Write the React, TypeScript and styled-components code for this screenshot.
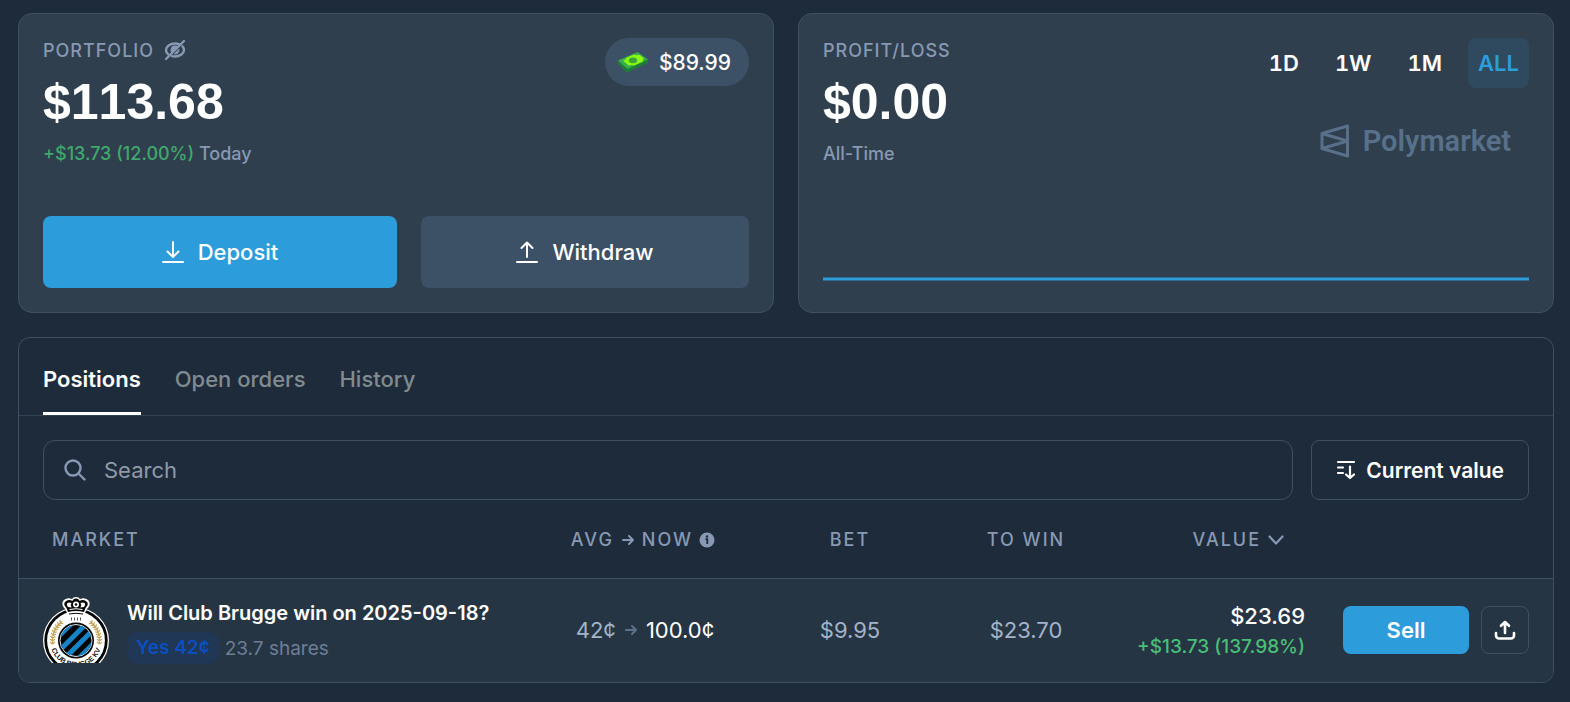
import React, { useState } from 'react';
import styled, { createGlobalStyle, css } from 'styled-components';

const color = {
  page: '#1e2b3a',
  card: '#2f3f4e',
  row: '#263543',
  line: '#3e5062',
  soft: '#3d5166',
  blue: '#2d9cdb',
  label: '#8899b3',
  muted: '#808b90',
  green: '#3fa86b',
  lime: '#48bf75',
};

const GlobalStyle = createGlobalStyle`
  *, *::before, *::after { box-sizing: border-box; }
  body {
    margin: 0;
    background: ${color.page};
    color: #fff;
    font-family: Inter, "Liberation Sans", sans-serif;
    font-size: 22px;
  }
  button, input { font: inherit; color: inherit; }
  button { cursor: pointer; }
`;

const Page = styled.main`
  display: flex;
  flex-direction: column;
  gap: 24px;
  padding: 13px 16px 19px 18px;
`;

const Cards = styled.div`
  display: grid;
  grid-template-columns: 1fr 1fr;
  gap: 24px;
`;

const Card = styled.section`
  display: flex;
  flex-direction: column;
  justify-content: space-between;
  min-height: 300px;
  padding: 24px;
  background: ${color.card};
  border: 1px solid ${color.line};
  border-radius: 14px;
`;

const CardTop = styled.div`
  display: flex;
  justify-content: space-between;
  align-items: flex-start;
`;

const Summary = styled.div`
  display: flex;
  flex-direction: column;
`;

const Label = styled.h2`
  display: flex;
  align-items: center;
  gap: 10px;
  margin: 0;
  height: 24px;
  font-size: 18px;
  font-weight: 500;
  letter-spacing: 1px;
  color: ${color.label};
`;

const PlainButton = styled.button`
  display: flex;
  padding: 0;
  border: 0;
  background: none;
  color: inherit;
`;

const Amount = styled.p`
  margin: 8px 0 0;
  font-family: "Liberation Sans", Arial, sans-serif;
  font-size: 50px;
  line-height: 64px;
  font-weight: 700;
  font-kerning: none;
`;

const Note = styled.p`
  margin: 8px 0 0;
  font-size: 18px;
  line-height: 24px;
  font-weight: 500;
  color: ${color.label};
`;

const Gain = styled.span`
  color: ${color.green};
`;

const Cash = styled.div`
  display: flex;
  align-items: center;
  gap: 10px;
  height: 48px;
  padding: 0 18px 0 12px;
  border-radius: 24px;
  background: ${color.soft};
  font-size: 21px;
  font-weight: 500;
`;

const Actions = styled.div`
  display: grid;
  grid-template-columns: 354fr 328fr;
  gap: 24px;
`;

const ActionButton = styled.button<{ $primary?: boolean }>`
  display: flex;
  align-items: center;
  justify-content: center;
  gap: 14px;
  height: 72px;
  border: 0;
  border-radius: 8px;
  background: ${p => (p.$primary ? color.blue : color.soft)};
  font-weight: 500;
`;

const Side = styled.div`
  display: flex;
  flex-direction: column;
  align-items: flex-end;
  gap: 35px;
`;

const Ranges = styled.div`
  display: flex;
  gap: 16px;
`;

const RangeButton = styled.button<{ $on: boolean }>`
  height: 50px;
  padding: 0 10px;
  border: 0;
  border-radius: 8px;
  background: ${p => (p.$on ? '#2f495e' : 'transparent')};
  color: ${p => (p.$on ? color.blue : '#fff')};
  font-weight: 600;
  font-variant-numeric: tabular-nums;
`;

const Brand = styled.div`
  display: flex;
  align-items: center;
  gap: 13px;
  padding-right: 18px;
  color: #587089;
  font-family: Roboto, sans-serif;
  font-size: 29px;
  line-height: 36px;
  font-weight: 600;
`;

const ChartLine = styled.svg`
  display: block;
  width: 100%;
  height: 4px;
  margin-bottom: 7px;
`;

const Panel = styled.section`
  overflow: hidden;
  border: 1px solid ${color.line};
  border-radius: 12px;
`;

const Tabs = styled.div`
  display: flex;
  gap: 34px;
  height: 78px;
  padding: 0 24px;
  border-bottom: 1px solid #314252;
`;

const Tab = styled.button<{ $on: boolean }>`
  padding: 8px 0 0;
  border: 0;
  background: none;
  border-bottom: 3px solid ${p => (p.$on ? '#fff' : 'transparent')};
  color: ${p => (p.$on ? '#fff' : color.muted)};
  font-weight: ${p => (p.$on ? 600 : 500)};
`;

const Tools = styled.div`
  display: flex;
  gap: 18px;
  padding: 24px 24px 0;
`;

const outlined = css`
  display: flex;
  align-items: center;
  border: 1px solid ${color.line};
  background: none;
`;

const SearchBox = styled.label`
  ${outlined}
  flex: 1;
  gap: 18px;
  height: 60px;
  padding: 0 20px;
  border-radius: 12px;
  color: ${color.label};
`;

const SearchInput = styled.input`
  flex: 1;
  min-width: 0;
  padding: 0;
  border: 0;
  outline: 0;
  background: none;
  color: #fff;
  &::placeholder { color: #8e9aa9; opacity: 1; }
`;

const SortButton = styled.button`
  ${outlined}
  gap: 10px;
  height: 60px;
  padding: 0 24px;
  border-radius: 8px;
  font-size: 21px;
  font-weight: 600;
`;

const Table = styled.table`
  width: 100%;
  table-layout: fixed;
  border-collapse: collapse;
`;

const Head = styled.th<{ $align?: string; $width?: number }>`
  width: ${p => (p.$width ? `${p.$width}px` : 'auto')};
  height: 78px;
  padding: 2px 0 0;
  text-align: ${p => p.$align || 'center'};
  font-size: 18px;
  font-weight: 500;
  letter-spacing: 2px;
  color: ${color.label};
  &:first-child { padding-left: 33px; }
`;

const HeadContent = styled.span`
  display: inline-flex;
  align-items: center;
  gap: 6px;
  padding-right: 4px;
`;

const SortHead = styled(PlainButton)`
  display: inline-flex;
  align-items: center;
  gap: 6px;
  margin-right: 20px;
  letter-spacing: 2px;
`;

const Row = styled.tr`
  background: ${color.row};
  border-top: 1px solid ${color.line};
`;

const Cell = styled.td<{ $align?: string }>`
  height: 104px;
  padding: 0;
  text-align: ${p => p.$align || 'center'};
  color: #a3b3c9;
`;

const Market = styled.div`
  display: flex;
  align-items: center;
  gap: 18px;
  padding-left: 24px;
`;

const MarketText = styled.div`
  display: flex;
  flex-direction: column;
  gap: 4px;
  padding-top: 2px;
`;

const MarketLink = styled.a`
  font-size: 20px;
  line-height: 30px;
  font-weight: 600;
  color: #fff;
  text-decoration: none;
`;

const Holding = styled.div`
  display: flex;
  align-items: center;
  gap: 6px;
  font-size: 19px;
  color: #6c7f97;
`;

const Outcome = styled.span`
  padding: 0 9px;
  line-height: 32px;
  border-radius: 10px;
  background: #203755;
  color: #0a4fc0;
  font-weight: 600;
`;

const Price = styled.div`
  display: inline-flex;
  align-items: center;
  gap: 7px;
`;

const Strong = styled.span`
  color: #fff;
`;

const Value = styled.div`
  padding-top: 3px;
  font-size: 22px;
  line-height: 30px;
  font-weight: 500;
  color: #fff;
`;

const ValueGain = styled.div`
  font-size: 19px;
  line-height: 32px;
  font-weight: 500;
  color: ${color.lime};
`;

const RowActions = styled.div`
  display: flex;
  justify-content: flex-end;
  gap: 12px;
  padding-right: 24px;
  color: #fff;
`;

const SellButton = styled.button`
  width: 126px;
  height: 48px;
  border: 0;
  border-radius: 8px;
  background: ${color.blue};
  font-weight: 600;
`;

const ShareButton = styled.button`
  ${outlined}
  justify-content: center;
  width: 48px;
  height: 48px;
  padding: 0;
  border-radius: 8px;
`;

const Line = styled.svg<{ $weight?: number }>`
  display: block;
  flex: none;
  fill: none;
  stroke: currentColor;
  stroke-width: ${p => p.$weight || 2};
  stroke-linecap: round;
  stroke-linejoin: round;
`;

const HideIcon = () => (
  <Line width="22" height="22" viewBox="0 0 22 22" $weight={2.4}>
    <path d="M4.200 15.200C2.600 13.900 2 12.300 2 11c0-3.400 4-6.500 9-6.500 1.600 0 3 .3 4.200.8M18.400 7.300C19.500 8.400 20 9.700 20 11c0 3.400-4 6.500-9 6.500-1.100 0-2.100-.1-3-.4" />
    <path d="M7.800 14.200a4.500 4.500 0 0 1 6.400-6.400z" fill="currentColor" stroke="none" />
    <path d="M15.200 9.600a4.400 4.400 0 0 1-5.600 5.600z" fill="currentColor" stroke="none" />
    <path d="M2 20 20 2" />
  </Line>
);

const DepositIcon = () => (
  <Line width="22" height="22" viewBox="0 0 22 22">
    <path d="M11 1v14.500M5.500 10.500 11 16l5.500-5.500" />
    <path d="M1 21h20" />
  </Line>
);

const WithdrawIcon = () => (
  <Line width="22" height="22" viewBox="0 0 22 22">
    <path d="M11 16V1.500M5.500 7 11 1.500 16.500 7" />
    <path d="M1 21h20" />
  </Line>
);

const CashIcon = () => (
  <svg width="32" height="24" viewBox="0 0 32 24">
    <path d="M1 10.500V14l9 8.500L31 13V9.500L10.500 19z" fill="#1c7f35" />
    <path d="M1 10.500 20.500 2 31 9.500 10.500 19z" fill="#37ad4c" />
    <path d="M6 10.600c2 0 3-1.600 3-2.600l8-3.400c2 .8 4 .6 5.500.2L27 8.400c-1.500.8-1.500 2-1 3l-9 4c-2-.7-4-.6-5.400.2z" fill="#8cf914" />
    <ellipse cx="16" cy="10.300" rx="4.200" ry="2.900" fill="#3aa63a" />
  </svg>
);

const BrandMark = () => (
  <svg width="30" height="34" viewBox="0 0 30 34" fill="none" stroke="currentColor" strokeWidth="3" strokeLinejoin="round">
    <path d="M2 9.500 27.500 2v30L2 24.500zM2 9.500 27.500 17 2 24.500" />
  </svg>
);

const SearchIcon = () => (
  <Line width="22" height="22" viewBox="0 0 22 22" $weight={2.4}>
    <circle cx="9" cy="9" r="7.500" />
    <path d="m14.500 14.500 6 6" />
  </Line>
);

const SortIcon = () => (
  <Line width="20" height="20" viewBox="0 0 20 20" $weight={2.2}>
    <path d="M2 2h16M2 7.500h5M2 13h5M14 6.500v11.500M10 14.500l4 3.500 4-3.500" />
  </Line>
);

const ArrowIcon = ({ faint }: { faint?: boolean }) => (
  <Line width="16" height="16" viewBox="0 0 16 16" color={faint ? '#5d728a' : undefined}>
    <path d="M3 8h10M9 4l4 4-4 4" />
  </Line>
);

const InfoIcon = () => (
  <svg width="16" height="16" viewBox="0 0 16 16">
    <circle cx="8" cy="8" r="7.500" fill={color.label} />
    <circle cx="8" cy="4.500" r="1.200" fill={color.page} />
    <path d="M6.500 7.200h1.800v4.800" fill="none" stroke={color.page} strokeWidth="1.800" />
  </svg>
);

const ChevronIcon = () => (
  <Line width="18" height="12" viewBox="0 0 18 12" $weight={2.2}>
    <path d="m2.500 2.500 6.500 7 6.500-7" />
  </Line>
);

const ShareIcon = () => (
  <Line width="22" height="22" viewBox="0 0 22 22" $weight={2.6}>
    <path d="M11 14V3M7 6.800 11 3l4 3.800M2 14v2.500a3 3 0 0 0 3 3h12a3 3 0 0 0 3-3V14" />
  </Line>
);

const wheat = [0, 1, 2, 3, 4, 5, 6, 7, 8];

const ClubBadge = () => (
  <svg width="66" height="66" viewBox="0 0 66 66" role="img" aria-label="Club Brugge">
    <defs>
      <clipPath id="disc"><circle cx="33" cy="43.500" r="15.500" /></clipPath>
      <path id="ribbon" d="M6.800 43.500a26.200 26.200 0 0 0 52.400 0" />
    </defs>
    <circle cx="33" cy="43.500" r="33" fill="#fff" />
    <circle cx="33" cy="43.500" r="30.300" fill="#fff" stroke="#050505" strokeWidth="2.800" />
    {[-1, 1].map(side =>
      wheat.map(i => {
        const deg = -6 + i * 7;
        const a = (deg * Math.PI) / 180;
        const x = 33 + side * 23.5 * Math.cos(a);
        const y = 43.5 - 23.5 * Math.sin(a);
        return (
          <g key={`${side}${i}`} transform={`translate(${x} ${y}) rotate(${-side * deg})`} stroke="#c2a557" strokeWidth="1.200">
            <path d="M0 1.500V-1.500M0 1l-2.500-2M0 1l2.500-2" fill="none" />
          </g>
        );
      }),
    )}
    <path d="M28.500 20.500v3M31.500 20.500v3M34.500 20.500v3M37.500 20.500v3" stroke="#555" strokeWidth="1" />
    <circle cx="33" cy="43.500" r="18" fill="#0a0a0a" />
    <circle cx="33" cy="43.500" r="16" fill="#050505" stroke="#dfe8ee" strokeWidth="1" />
    <g clipPath="url(#disc)" stroke="#1583c6" strokeWidth="5">
      <path d="M10 45 35 20M10 60 50 20M22 61 52 31M32 65 60 37" />
    </g>
    <text fontFamily="Liberation Sans, sans-serif" fontSize="7" fontWeight="700" fill="#111" textAnchor="middle">
      <textPath href="#ribbon" startOffset="50%">CLUB BRUGGE KV</textPath>
    </text>
    <path d="M20 4q3-4 9-2 1-2 4-2t4 2q6-2 9 2 2 4-2 8l-3 6H25l-3-6q-4-4-2-8z" fill="#fff" />
    <path d="M23.500 11q-4-4-1-6.500 3.500-2.500 7-.5.500-2.500 3.500-2.500t3.500 2.500q3.500-2 7 .5 3 2.500-1 6.500l-1.500 4q-8-2-16 0z" fill="#080808" />
    <path d="M25 10q-2-2.500-.5-4 2-1 4 0-1.500 2 0 4.500zM41 10q2-2.500.5-4-2-1-4 0 1.500 2 0 4.500z" fill="#fff" />
    <circle cx="33" cy="7.500" r="3" fill="#fff" />
    <circle cx="33" cy="7.500" r="1.300" fill="#080808" />
    <path d="M26.500 12.500q6.500-1.500 13 0" fill="none" stroke="#fff" strokeWidth="1" />
    <path d="M26 17q7-1.500 14 0" fill="none" stroke="#080808" strokeWidth="1" />
  </svg>
);

const ranges = ['1D', '1W', '1M', 'ALL'];
const tabs = ['Positions', 'Open orders', 'History'];

export default function App() {
  const [range, setRange] = useState('ALL');
  const [tab, setTab] = useState('Positions');

  return (
    <>
      <GlobalStyle />
      <Page>
        <Cards>
          <Card>
            <CardTop>
              <Summary>
                <Label>
                  PORTFOLIO
                  <PlainButton aria-label="Hide balance"><HideIcon /></PlainButton>
                </Label>
                <Amount>$113.68</Amount>
                <Note><Gain>+$13.73 (12.00%)</Gain> Today</Note>
              </Summary>
              <Cash><CashIcon />$89.99</Cash>
            </CardTop>
            <Actions>
              <ActionButton $primary><DepositIcon />Deposit</ActionButton>
              <ActionButton><WithdrawIcon />Withdraw</ActionButton>
            </Actions>
          </Card>
          <Card>
            <CardTop>
              <Summary>
                <Label>PROFIT/LOSS</Label>
                <Amount>$0.00</Amount>
                <Note>All-Time</Note>
              </Summary>
              <Side>
                <Ranges>
                  {ranges.map(r => (
                    <RangeButton key={r} $on={r === range} onClick={() => setRange(r)}>{r}</RangeButton>
                  ))}
                </Ranges>
                <Brand><BrandMark />Polymarket</Brand>
              </Side>
            </CardTop>
            <ChartLine viewBox="0 0 100 4" preserveAspectRatio="none">
              <path d="M0 2h100" stroke={color.blue} strokeWidth="3" />
            </ChartLine>
          </Card>
        </Cards>

        <Panel>
          <Tabs role="tablist">
            {tabs.map(t => (
              <Tab key={t} role="tab" aria-selected={t === tab} $on={t === tab} onClick={() => setTab(t)}>{t}</Tab>
            ))}
          </Tabs>
          <Tools>
            <SearchBox>
              <SearchIcon />
              <SearchInput type="text" placeholder="Search" aria-label="Search" />
            </SearchBox>
            <SortButton><SortIcon />Current value</SortButton>
          </Tools>
          <Table>
            <thead>
              <tr>
                <Head $align="left">MARKET</Head>
                <Head $width={186}><HeadContent>AVG <ArrowIcon />NOW <InfoIcon /></HeadContent></Head>
                <Head $width={224}>BET</Head>
                <Head $width={128}>TO WIN</Head>
                <Head $width={215} $align="right"><SortHead>VALUE <ChevronIcon /></SortHead></Head>
                <Head $width={248} aria-label="Actions" />
              </tr>
            </thead>
            <tbody>
              <Row>
                <Cell $align="left">
                  <Market>
                    <ClubBadge />
                    <MarketText>
                      <MarketLink href="#market">Will Club Brugge win on 2025-09-18?</MarketLink>
                      <Holding><Outcome>Yes 42¢</Outcome>23.7 shares</Holding>
                    </MarketText>
                  </Market>
                </Cell>
                <Cell><Price>42¢ <ArrowIcon faint /><Strong>100.0¢</Strong></Price></Cell>
                <Cell>$9.95</Cell>
                <Cell>$23.70</Cell>
                <Cell $align="right">
                  <Value>$23.69</Value>
                  <ValueGain>+$13.73 (137.98%)</ValueGain>
                </Cell>
                <Cell>
                  <RowActions>
                    <SellButton>Sell</SellButton>
                    <ShareButton aria-label="Share"><ShareIcon /></ShareButton>
                  </RowActions>
                </Cell>
              </Row>
            </tbody>
          </Table>
        </Panel>
      </Page>
    </>
  );
}
